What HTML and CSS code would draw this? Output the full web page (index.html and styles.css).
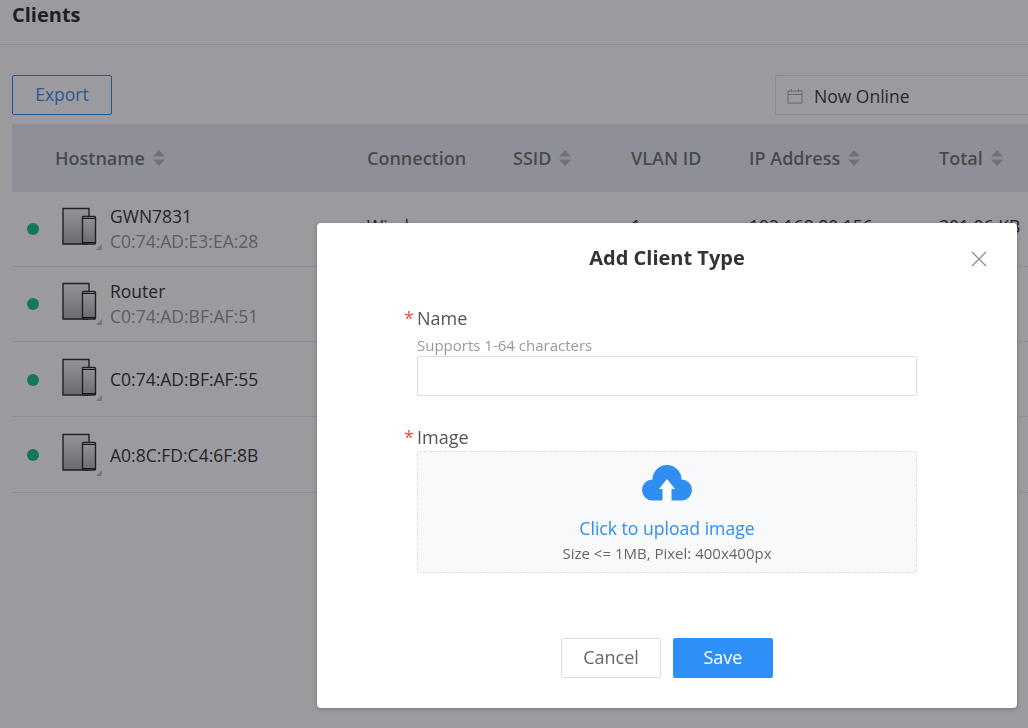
FILE: index.html
```html
<!DOCTYPE html>
<html>
<head>
    <meta charset="UTF-8">
    <title>Clients</title>
    <link rel="stylesheet" href="styles.css">
</head>
<body>
<svg class="defs">
    <defs>
        <linearGradient id="device-fill" x1="0" y1="0" x2="0" y2="1">
            <stop offset="0" stop-color="#f4f4f4"/>
            <stop offset="1" stop-color="#b0b0b0"/>
        </linearGradient>
        <symbol id="device" viewBox="0 0 44 44">
            <path d="M27 37H2V1.500H28V9" fill="url(#device-fill)" stroke="#333" stroke-width="1.400"/>
            <rect x="21.500" y="9.500" width="13" height="27.500" rx="1" fill="url(#device-fill)" stroke="#333" stroke-width="1.400"/>
            <path d="M21.500 11.500h13M21.500 35.500h13" stroke="#222" stroke-width="1.200"/>
            <path d="M41 37v6h-6z" fill="#c4c4c4"/>
        </symbol>
        <symbol id="sorter" viewBox="0 0 12 16">
            <path d="M6 0l6 6.500H0zM6 16L0 9.500h12z" fill="#b9bac0"/>
        </symbol>
    </defs>
</svg>

<div class="page">
    <div class="title-bar">Clients</div>

    <div class="toolbar">
        <button class="btn-export">Export</button>
        <div class="range-picker">
            <svg class="calendar" viewBox="0 0 16 16">
                <path d="M1 3h14v12H1zM1 6.500h14M4.500 1v3M11.500 1v3" fill="none" stroke="#aaa" stroke-width="1"/>
            </svg>
            <span>Now Online</span>
        </div>
    </div>

    <div class="table">
        <div class="row table-head">
            <div></div>
            <div class="th">Hostname <svg class="sort"><use href="#sorter"/></svg></div>
            <div class="th">Connection</div>
            <div class="th">SSID <svg class="sort"><use href="#sorter"/></svg></div>
            <div class="th">VLAN ID</div>
            <div class="th">IP Address <svg class="sort"><use href="#sorter"/></svg></div>
            <div class="th">Total <svg class="sort"><use href="#sorter"/></svg></div>
        </div>
        <div class="row client">
            <div class="status"><i class="dot"></i></div>
            <div class="host">
                <svg class="device"><use href="#device"/></svg>
                <div>
                    <div class="host-name">GWN7831</div>
                    <div class="host-mac">C0:74:AD:E3:EA:28</div>
                </div>
            </div>
            <div class="cell">Wireless</div>
            <div class="cell"></div>
            <div class="cell">1</div>
            <div class="cell">192.168.80.156</div>
            <div class="cell">301.06 KB</div>
        </div>
        <div class="row client">
            <div class="status"><i class="dot"></i></div>
            <div class="host">
                <svg class="device"><use href="#device"/></svg>
                <div>
                    <div class="host-name">Router</div>
                    <div class="host-mac">C0:74:AD:BF:AF:51</div>
                </div>
            </div>
        </div>
        <div class="row client">
            <div class="status"><i class="dot"></i></div>
            <div class="host">
                <svg class="device"><use href="#device"/></svg>
                <div class="host-name">C0:74:AD:BF:AF:55</div>
            </div>
        </div>
        <div class="row client">
            <div class="status"><i class="dot"></i></div>
            <div class="host">
                <svg class="device"><use href="#device"/></svg>
                <div class="host-name">A0:8C:FD:C4:6F:8B</div>
            </div>
        </div>
    </div>
</div>

<div class="mask"></div>

<div class="modal">
    <div class="modal-head">
        <h2>Add Client Type</h2>
        <svg class="close" viewBox="0 0 16 16">
            <path d="M1 1l14 14M15 1L1 15" stroke="#8c8c8c" stroke-width="1.300" fill="none"/>
        </svg>
    </div>
    <div class="form">
        <div class="form-group">
            <label class="form-label"><span class="star">*</span>Name</label>
            <div class="hint">Supports 1-64 characters</div>
            <input type="text" class="text-input">
        </div>
        <div class="form-group">
            <label class="form-label"><span class="star">*</span>Image</label>
            <div class="upload">
                <svg class="cloud" viewBox="0 0 50 36">
                    <path d="M10.500 35.500A10.500 10.500 0 0 1 10.500 14.500 14.500 14.500 0 0 1 39.500 14.500 10.500 10.500 0 0 1 39.500 35.500z" fill="#2e8ff0"/>
                    <path d="M25 14l8 10h-3.500V36h-9V24H17z" fill="#fff"/>
                </svg>
                <div class="upload-text">Click to upload image</div>
                <div class="upload-hint">Size &lt;= 1MB, Pixel: 400x400px</div>
            </div>
        </div>
    </div>
    <div class="modal-foot">
        <button class="btn btn-cancel">Cancel</button>
        <button class="btn btn-save">Save</button>
    </div>
</div>
</body>
</html>
```

FILE: styles.css
```css
html, body {
    margin: 0;
    height: 100%;
    overflow: hidden;
}
body {
    background-color: #fff;
    color: #333;
    font-family: "Open Sans", sans-serif;
    font-size: 16px;
}
.defs {
    position: absolute;
    width: 0;
    height: 0;
}
.page {
    width: 1028px;
    overflow: hidden;
}
.title-bar {
    height: 26px;
    padding: 2px 12px 16px;
    border-bottom: 1px solid #e4e4e8;
    font-size: 20px;
    font-weight: 700;
    line-height: 26px;
}
.toolbar {
    display: flex;
    gap: 663px;
    padding: 30px 0 0 12px;
}
.btn-export {
    flex: none;
    width: 100px;
    height: 40px;
    padding: 0 0 2px;
    background: #fff;
    border: 1px solid #2e8fff;
    border-radius: 2px;
    color: #4a90e8;
    font-family: inherit;
    font-size: 17.500px;
}
.range-picker {
    flex: none;
    display: flex;
    align-items: center;
    gap: 11px;
    width: 300px;
    height: 40px;
    padding: 1px 0 0 11px;
    box-sizing: border-box;
    border: 1px solid #e6e6ea;
    border-radius: 2px;
    font-size: 17.500px;
    color: #444;
}
.calendar {
    width: 16px;
    height: 16px;
}
.table {
    margin: 9px 0 0 12px;
}
.row {
    display: grid;
    grid-template-columns: 43px 312px 146px 118px 118px 190px 1fr;
    align-items: center;
}
.table-head {
    height: 67.500px;
    background-color: #ecedf2;
}
.th {
    display: flex;
    align-items: center;
    gap: 8px;
    font-size: 18px;
    font-weight: 600;
    color: #777;
    white-space: nowrap;
}
.sort {
    width: 12px;
    height: 16px;
}
.client {
    height: 75.300px;
    padding-top: 1px;
    box-sizing: border-box;
    border-bottom: 1px solid #e6e6ea;
    white-space: nowrap;
}
.cell {
    padding-bottom: 6px;
    font-size: 17.500px;
    color: #3a3a3a;
}
.status {
    padding-left: 15px;
}
.dot {
    display: block;
    width: 12px;
    height: 12px;
    border-radius: 50%;
    background-color: #1fc48b;
}
.host {
    display: flex;
    align-items: center;
    gap: 7px;
    margin-left: 6px;
}
.device {
    width: 44px;
    height: 44px;
    margin-right: -2px;
}
.host-name {
    font-size: 17.500px;
    line-height: 25px;
    color: #3a3a3a;
}
.host-mac {
    font-size: 17.500px;
    line-height: 25px;
    color: #999;
}
.mask {
    position: fixed;
    inset: 0;
    background-color: rgba(5, 5, 15, 0.4);
}
.modal {
    position: fixed;
    left: 317px;
    top: 223px;
    width: 700px;
    height: 485px;
    display: flex;
    flex-direction: column;
    background-color: #fff;
    border-radius: 4px;
    box-shadow: 0 1px 4px rgba(0, 0, 0, 0.25);
}
.modal-head {
    position: relative;
    height: 70px;
    display: flex;
    align-items: center;
    justify-content: center;
}
.modal-head h2 {
    margin: 0 0 2px;
    font-size: 20px;
    font-weight: 700;
    color: #333;
}
.close {
    position: absolute;
    right: 30px;
    top: 28px;
    width: 16px;
    height: 16px;
}
.form {
    flex: 1;
    padding: 13px 100px 0;
}
.form-group {
    margin-bottom: 29px;
}
.form-label {
    position: relative;
    display: block;
    font-size: 18px;
    line-height: 24px;
    color: #555;
}
.star {
    position: absolute;
    left: -13px;
    top: 0;
    color: #f04b3e;
}
.hint {
    margin-top: 5px;
    font-size: 15px;
    line-height: 20px;
    color: #999;
}
.text-input {
    display: block;
    width: 100%;
    height: 40px;
    margin-top: 1px;
    box-sizing: border-box;
    border: 1px solid #dcdcdc;
    border-radius: 2px;
}
.upload {
    display: flex;
    flex-direction: column;
    align-items: center;
    height: 122px;
    margin-top: 2px;
    padding-top: 13px;
    box-sizing: border-box;
    background-color: #f8f9fb;
    border: 1px dashed #dcdcdc;
    border-radius: 2px;
}
.cloud {
    width: 50px;
    height: 36px;
}
.upload-text {
    margin-top: 15px;
    font-size: 17.600px;
    line-height: 24px;
    color: #2e8ff0;
}
.upload-hint {
    margin-top: 3px;
    font-size: 15px;
    line-height: 20px;
    color: #666;
}
.modal-foot {
    display: flex;
    justify-content: center;
    gap: 12px;
    padding-bottom: 30px;
}
.btn {
    width: 100px;
    height: 40px;
    padding: 0 0 2px;
    border-radius: 2px;
    font-family: inherit;
    font-size: 18px;
}
.btn-cancel {
    background-color: #fff;
    border: 1px solid #dedede;
    color: #666;
}
.btn-save {
    background-color: #2e8ff8;
    border: 1px solid #2e8ff8;
    color: #fff;
}
```
